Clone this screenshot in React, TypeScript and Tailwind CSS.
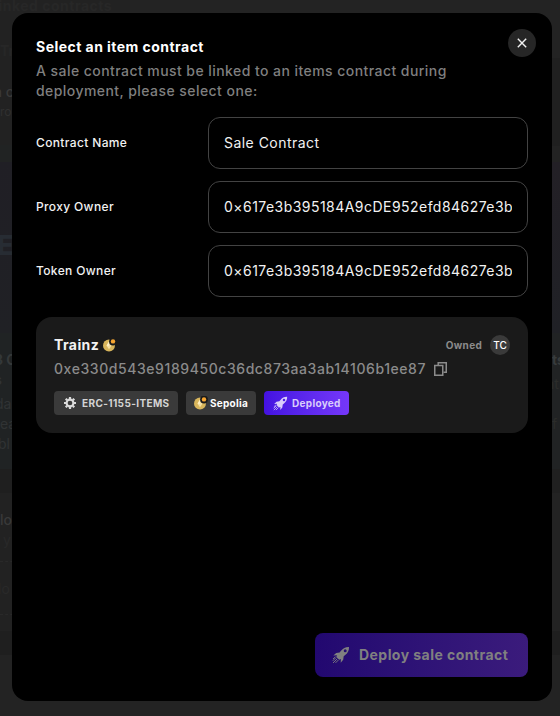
import React from "react";

function RocketIcon({ size, className = "" }: { size: number; className?: string }) {
  return (
    <svg width={size} height={size} viewBox="0 0 18 18" fill="currentColor" className={`shrink-0 ${className}`}>
      <path
        fillRule="evenodd"
        d="M17 .9c-3.400-.1-6 1.200-8 3.800L7.600 6.400 4.200 6.900 1.400 9.500l3.500-.3-.6 1.700 2.900 2.900 1.700-.7-.2 3.600 2.500-3 .5-3.400 1.500-1.300C15.900 6.900 17.100 4.400 17 .9zM13.200 3.300a1.500 1.500 0 1 1 0 3 1.500 1.500 0 0 1 0-3z"
      />
      <path d="M4 11.600.8 14.800M5.200 12.800 1 17M6.400 14 3.500 16.900M3.400 10.800 1 13" stroke="currentColor" strokeWidth=".9" fill="none" />
    </svg>
  );
}

function NetworkIcon({ ring }: { ring: string }) {
  return (
    <svg width="14" height="14" viewBox="0 0 14 14" className="shrink-0">
      <circle cx="6" cy="7.500" r="6" fill="#d9b65c" />
      <path d="M6 3.500 8.500 7.700 6 11.200 3.500 7.700z" fill="#f5dfa0" />
      <path d="M6 3.500v4.200H3.500z" fill="#fff0c4" />
      <circle cx="10" cy="3.500" r="3.900" fill={ring} />
      <circle cx="10" cy="3.400" r="2.200" fill="#f6a531" />
    </svg>
  );
}

function GearIcon() {
  return (
    <svg width="12" height="12" viewBox="0 0 12 12" className="shrink-0" fill="none" stroke="#dcdcdc">
      <circle cx="6" cy="6" r="3.400" strokeWidth="2.100" />
      <path
        d="M6 0v2M6 10v2M0 6h2M10 6h2M1.750 1.750l1.400 1.400M8.850 8.850l1.400 1.400M1.750 10.250l1.400-1.400M8.850 3.150l1.400-1.400"
        strokeWidth="2.200"
      />
    </svg>
  );
}

function CopyIcon() {
  return (
    <svg width="13" height="14" viewBox="0 0 13 14" fill="none" stroke="#8b8b8b" strokeWidth="1.500" className="shrink-0">
      <path d="M4.200 3V.75h8.050v9.600H9.500" />
      <path d="M.75 3.500h8v9.750h-8z" />
    </svg>
  );
}

function Field({ label, value }: { label: string; value: string }) {
  return (
    <label className="flex h-[52px] items-center justify-between">
      <span className="text-xs font-medium tracking-[0.36px] text-[#f2f2f2]">{label}</span>
      <input
        readOnly
        value={value}
        className="h-[52px] w-80 rounded-xl border border-[#434343] bg-black px-[15px] pb-0.5 text-sm tracking-[0.46px] text-[#f2f2f2] outline-none"
      />
    </label>
  );
}

function Backdrop() {
  return (
    <div className="flex h-[716px] w-[560px] justify-between overflow-hidden bg-[#232323] text-sm leading-5 whitespace-nowrap">
      <div className="w-[130px] overflow-hidden">
        <div className="h-[145px] bg-[#222222] text-[#272727]">
          <div className="-ml-2.5 h-[41px] -translate-y-1 font-bold tracking-[0.5px]">Linked contracts</div>
          <div className="h-[41px] font-bold">Tra</div>
          <div className="-ml-1.5 h-5 font-medium text-[#393939]">a c</div>
          <div className="pt-0.5 text-xs text-[#303030]">ro</div>
        </div>
        <div className="h-[17px] bg-[#212323]" />
        <div className="h-[171px] bg-gradient-to-b from-[#201f25] to-[#202125] pt-[70px] text-[27px] leading-7 font-extrabold text-[#272c33]">
          <div className="-ml-[3px]">E</div>
        </div>
        <div className="h-[136px] bg-[#202324] pt-[17px] text-[#303334]">
          <div className="-ml-1.5 font-bold text-[#343839]">3 C</div>
          <div className="-ml-1.5 font-bold">s</div>
          <div className="-ml-[5px] pt-1">da</div>
          <div>ea</div>
          <div className="-ml-0.5">bl</div>
        </div>
        <div className="h-6 bg-[#1f1f1f]" />
        <div className="h-[138px] bg-[#222222] pt-[17px] text-[#292929]">
          <div className="font-medium text-[#393939]">lo</div>
          <div className="pl-[3px]">y</div>
          <div className="mt-[11px] border-t border-dashed border-[#292929] pt-[17px]">
            <div className="-ml-0.5">lo</div>
          </div>
          <div className="mt-[15px] border-t border-dashed border-[#292929]" />
        </div>
        <div className="h-6 bg-[#1f1f1f]" />
      </div>
      <div className="w-2 overflow-hidden">
        <div className="h-[58px] bg-[#232323]" />
        <div className="h-[88px] bg-[#202020]" />
        <div className="h-4 bg-[#232323]" />
        <div className="h-[171px] bg-gradient-to-b from-[#232026] to-[#202126]" />
        <div className="h-[136px] bg-[#212324] pt-[17px] text-[#303435]">
          <div className="font-bold text-[#383c3d]">ts</div>
          <div className="-ml-1.5 pt-1 text-[#2c2d2b]">nt</div>
          <div className="pt-5 text-[#2c2d2b]">f</div>
        </div>
        <div className="h-6 bg-[#202020]" />
        <div className="h-[138px] bg-[#232323]" />
        <div className="h-6 bg-[#1f1f1f]" />
      </div>
    </div>
  );
}

export default function App() {
  return (
    <div className="relative h-[716px] w-[560px] overflow-hidden font-['Inter',sans-serif]">
      <Backdrop />
      <section
        role="dialog"
        className="absolute top-[13px] left-3 flex h-[688px] w-[540px] flex-col rounded-2xl bg-black p-6"
      >
        <button
          aria-label="Close"
          className="absolute top-4 right-4 flex size-7 items-center justify-center rounded-full bg-[#262626]"
        >
          <svg width="10" height="10" viewBox="0 0 10 10" fill="none" stroke="#f2f2f2" strokeWidth="1.400">
            <path d="M.8.8l8.400 8.400M9.200.8.800 9.200" />
          </svg>
        </button>

        <header className="flex flex-col gap-1 text-sm leading-5">
          <h1 className="font-bold tracking-[0.46px] text-white">Select an item contract</h1>
          <p className="w-[440px] font-medium tracking-[0.44px] text-[#7f7f7f]">
            A sale contract must be linked to an items contract during deployment, please select one:
          </p>
        </header>

        <div className="mt-4 flex flex-col gap-3">
          <Field label="Contract Name" value="Sale Contract" />
          <Field label="Proxy Owner" value="0×617e3b395184A9cDE952efd84627e3b" />
          <Field label="Token Owner" value="0×617e3b395184A9cDE952efd84627e3b" />
        </div>

        <article className="mt-5 flex h-[116px] flex-col rounded-2xl bg-[#1a1a1a] p-[18px]">
          <div className="flex h-5 items-center justify-between">
            <div className="flex items-center gap-1">
              <h2 className="text-sm leading-5 font-bold tracking-[0.4px] text-[#f2f2f2]">Trainz</h2>
              <NetworkIcon ring="#1a1a1a" />
            </div>
            <div className="flex items-center gap-2">
              <span className="text-[10px] font-bold tracking-[0.3px] text-[#8b8b8b]">Owned</span>
              <span className="flex size-5 items-center justify-center rounded-full bg-[#3a3a3a] text-[10px] font-medium text-white">
                TC
              </span>
            </div>
          </div>
          <div className="mt-1 flex h-5 items-center gap-2">
            <span className="text-sm leading-5 font-medium tracking-[0.57px] text-[#8b8b8b]">
              0xe330d543e9189450c36dc873aa3ab14106b1ee87
            </span>
            <CopyIcon />
          </div>
          <div className="mt-3 flex h-6 gap-2 text-[10px] font-bold">
            <span className="flex w-[124px] items-center gap-1.5 rounded-[4px] bg-[#3a3a3a] pl-2.5 tracking-[0.38px] text-[#d4d4d4]">
              <GearIcon />
              ERC-1155-ITEMS
            </span>
            <span className="flex w-[70px] items-center gap-0.5 rounded-[4px] bg-[#3a3a3a] pl-2 tracking-[0.26px] text-white">
              <NetworkIcon ring="#1a1a1a" />
              Sepolia
            </span>
            <span className="flex w-[85px] items-center gap-1 rounded-[4px] bg-gradient-to-r from-[#4411e1] to-[#7537f9] pl-[9px] tracking-[0.3px] text-[#d9cdfb]">
              <RocketIcon size={15} />
              Deployed
            </span>
          </div>
        </article>

        <button className="mt-auto flex h-11 w-[213px] items-center gap-[9px] self-end rounded-lg bg-gradient-to-r from-[#220870] to-[#3b1b7c] pl-[17px] text-sm font-bold tracking-[0.45px] text-[#808080]">
          <RocketIcon size={18} />
          Deploy sale contract
        </button>
      </section>
    </div>
  );
}
